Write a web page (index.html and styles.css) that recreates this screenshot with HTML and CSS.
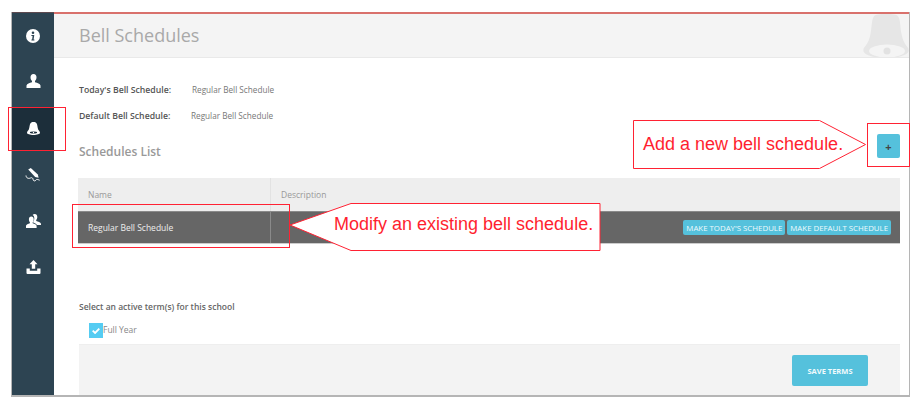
FILE: index.html
```html
<!DOCTYPE html>
<html>
<head>
    <meta charset="UTF-8">
    <title>Bell Schedules</title>
    <link rel="stylesheet" href="styles.css">
</head>
<body>
    <div class="frame">
        <nav class="sidebar">
            <a class="nav-item">
                <svg width="14" height="14" viewBox="0 0 14 14"><circle cx="7" cy="7" r="7" fill="#fff"/><path d="M7 2.400a1.300 1.300 0 1 1 0 2.600 1.300 1.300 0 0 1 0-2.600zM5.400 6h2.900l-.7 4.400h.8v1H5.400v-1h.7L6.600 7H5.400z" fill="#2d4452"/></svg>
            </a>
            <a class="nav-item">
                <svg width="15" height="14" viewBox="0 0 15 14"><path d="M7.500 0c2 0 3 1.400 3 3.300 0 1.700-.7 3-1.500 3.800v1.200c2.500.6 5 1.400 5.500 3.200v2.500H.5v-2.500c.5-1.800 3-2.600 5.500-3.200V7.100C5.200 6.300 4.500 5 4.500 3.300 4.500 1.400 5.500 0 7.500 0z" fill="#fff"/></svg>
            </a>
            <a class="nav-item active">
                <svg width="13" height="13" viewBox="0 0 13 13"><path d="M6.500 0c1.700 0 3 .6 3.500 2.200.6 2 .6 4 1.300 5.600.3.800 1.700 1.700 1.700 3 0 1.300-3 2.200-6.500 2.200S0 12.100 0 10.800c0-1.300 1.400-2.200 1.700-3C2.400 6.200 2.400 4.200 3 2.200 3.500.6 4.800 0 6.500 0z" fill="#fff"/><ellipse cx="6.500" cy="10.500" rx="3.600" ry="1.100" fill="#1c2e3a"/><circle cx="6.500" cy="10.500" r=".7" fill="#fff"/></svg>
            </a>
            <a class="nav-item">
                <svg width="16" height="16" viewBox="0 0 16 16"><path d="M3.200 2.400L5.800 1l7 6.600.8 3.200-3.400-.9z" fill="#fff"/><path d="M1 8.500c.3 3 2.800 3.300 4.500 2.500 1.600-.8 2.400.2 2.600 1.500.3 1.800 2 1.800 3 .4.500-.7 1.500-.6 3.500.3" fill="none" stroke="#fff" stroke-width="1"/></svg>
            </a>
            <a class="nav-item">
                <svg width="15" height="14" viewBox="0 0 15 14"><path d="M8.700 0c1.700 0 2.600 1.300 2.600 3 0 1.400-.6 2.500-1.100 3.100v1c1.800.5 4.300 1.100 4.800 2.600v1.300h-4c-.7-1.400-2.200-2-3.800-2.600v-.8c.7-.8 1.100-2 1.100-3.300C8.300 2.700 7.700 1.200 6.600.9 7.100.3 7.800 0 8.700 0z" fill="#fff"/><path d="M5.300 2.500c1.600 0 2.400 1.200 2.400 2.800 0 1.300-.5 2.300-1 2.900v1c1.800.5 3.700 1.100 3.900 2.600V14H0v-2.200c.2-1.500 2.100-2.100 3.900-2.600v-1c-.5-.6-1-1.600-1-2.900 0-1.600.8-2.800 2.400-2.800z" fill="#fff"/></svg>
            </a>
            <a class="nav-item">
                <svg width="15" height="14" viewBox="0 0 15 14"><path d="M7.500 0l4 4.200H9.200v4.600H5.800V4.200H3.500z" fill="#fff"/><path d="M.5 8.500h3.300v2.200h7.400V8.500h3.300V13a1 1 0 0 1-1 1h-12a1 1 0 0 1-1-1z" fill="#fff"/></svg>
            </a>
        </nav>

        <main class="main">
            <header class="page-head">
                <h1>Bell Schedules</h1>
                <svg class="ghost-bell" width="46" height="44" viewBox="0 0 46 44"><path d="M23 0c6 0 11 0 12.500 3 2 4 1.500 9 3 17 .8 4.500 2.500 9 5.500 12.500 2 2.200 2.200 4.500.5 6.500-3 3.200-12 5-21.500 5S4.500 42.200 1.500 39c-1.700-2-1.500-4.300.5-6.500C5 29 6.700 24.500 7.500 20c1.500-8 1-13 3-17C12 0 17 0 23 0z" fill="#e6e6e6"/><ellipse cx="24" cy="37" rx="18" ry="6.500" fill="#f4f4f4"/><circle cx="24" cy="37" r="3.500" fill="#e2e2e2"/></svg>
            </header>

            <section class="content">
                <div class="info-row">
                    <span class="info-label">Today's Bell Schedule:</span>
                    <span class="info-value">Regular Bell Schedule</span>
                </div>
                <div class="info-row second">
                    <span class="info-label">Default Bell Schedule:</span>
                    <span class="info-value">Regular Bell Schedule</span>
                </div>

                <div class="list-head">
                    <h2>Schedules List</h2>
                    <button class="add-btn">+</button>
                </div>

                <div class="table">
                    <div class="table-head">
                        <div class="col-name">Name</div>
                        <div class="col-desc">Description</div>
                    </div>
                    <div class="table-row">
                        <div class="col-name">Regular Bell Schedule</div>
                        <div class="col-desc row-actions">
                            <button class="small-btn">MAKE TODAY'S SCHEDULE</button>
                            <button class="small-btn">MAKE DEFAULT SCHEDULE</button>
                        </div>
                    </div>
                </div>

                <p class="term-title">Select an active term(s) for this school</p>
                <label class="term-check">
                    <span class="checkbox">
                        <svg width="8" height="6" viewBox="0 0 8 6"><path d="M.7 2.700l2.400 2.300L7.300.7" fill="none" stroke="#fff" stroke-width="1.800"/></svg>
                    </span>
                    Full Year
                </label>

                <div class="save-panel">
                    <button class="save-btn">SAVE TERMS</button>
                </div>
            </section>
        </main>
    </div>

    <!-- red annotations drawn over the screenshot -->
    <div class="mark mark-bell"></div>
    <div class="mark mark-row"></div>
    <div class="mark mark-add"></div>

    <div class="callout callout-add">
        <svg width="234" height="50" viewBox="0 0 234 50"><path d="M.5.500H186.500L232.500 24.500 186.500 48.500H.5z" fill="#fff" stroke="#ff2233"/></svg>
        <span>Add a new bell schedule.</span>
    </div>
    <div class="callout callout-modify">
        <svg width="312" height="49" viewBox="0 0 312 49"><path d="M311 .5V47.500H62L1 22 62 .5z" fill="#fff" stroke="#ff2233"/></svg>
        <span>Modify an existing bell schedule.</span>
    </div>
</body>
</html>
```

FILE: styles.css
```css
body {
    margin: 0;
    background-color: #fff;
    font-family: "Open Sans", "Liberation Sans", sans-serif;
    overflow: hidden;
    height: 409px;
}

button {
    font-family: inherit;
    border: none;
    cursor: pointer;
}

.frame {
    display: flex;
    width: 897px;
    height: 383px;
    margin: 12px 0 0 11px;
    border: 1px solid #b5b5b5;
    border-top: none;
    border-bottom-width: 2px;
    overflow: hidden;
}

.sidebar {
    width: 42px;
    flex-shrink: 0;
    padding-top: 1px;
    background-color: #2d4452;
    box-shadow: inset 0 1px 0 #5d4a50;
}

.nav-item {
    display: flex;
    justify-content: center;
    align-items: center;
    height: 45px;
}

.nav-item.active {
    height: 43px;
    margin: 4px 0 2px;
    background-color: #1c2e3a;
}

.active ~ .nav-item {
    height: 46px;
}

.main {
    flex: 1;
    min-width: 0;
    border-top: 2px solid #d9716c;
}

.page-head {
    position: relative;
    height: 43px;
    background-color: #f4f4f4;
    border-bottom: 1px solid #e9e9e9;
    overflow: hidden;
}

.page-head h1 {
    margin: 0;
    padding-left: 25px;
    font-size: 18px;
    font-weight: 400;
    line-height: 43px;
    color: #a9a9a9;
}

.ghost-bell {
    position: absolute;
    right: 0;
    top: 0;
}

.content {
    padding: 26px 9px 0 25px;
}

.info-row {
    display: flex;
    height: 12px;
    font-size: 8.700px;
    line-height: 12px;
}

.info-row.second {
    margin-top: 14px;
}

.info-label {
    width: 113px;
    font-weight: 600;
    color: #555;
}

.second .info-label {
    width: 112px;
}

.info-value {
    font-size: 8.200px;
    color: #777;
}

.list-head {
    display: flex;
    justify-content: space-between;
    align-items: flex-start;
    height: 50px;
    margin-top: 6px;
}

.list-head h2 {
    margin: 16px 0 0;
    font-size: 12px;
    font-weight: 600;
    line-height: 16px;
    color: #999;
}

.add-btn {
    width: 23px;
    height: 24px;
    margin-top: 6px;
    padding: 0;
    background-color: #55c1dc;
    border-radius: 2px;
    font-size: 11px;
    font-weight: 700;
    color: #444;
}

.table {
    margin-left: -1px;
}

.table-head {
    display: flex;
    height: 33px;
    background-color: #eee;
    font-size: 8.500px;
    line-height: 34px;
    color: #999;
}

.table-row {
    display: flex;
    height: 33px;
    background-color: #666;
    border-top: 1px solid #8a8a8a;
    border-bottom: 1px solid #ccc;
    box-sizing: border-box;
    font-size: 8.500px;
    line-height: 31px;
    color: #eee;
}

.col-name {
    width: 182px;
    padding-left: 10px;
    border-right: 1px solid #e2e2e2;
}

.table-row .col-name {
    border-right-color: #8a8a8a;
}

.col-desc {
    flex: 1;
    padding-left: 10px;
}

.row-actions {
    display: flex;
    justify-content: flex-end;
    align-items: center;
    gap: 2px;
    padding-right: 9px;
}

.small-btn {
    height: 15px;
    padding: 0 3px;
    background-color: #55c1dc;
    border-radius: 2px;
    font-size: 7.850px;
    color: #eefafd;
    white-space: nowrap;
}

.term-title {
    margin: 57px 0 0;
    font-size: 8.500px;
    font-weight: 600;
    line-height: 12px;
    color: #666;
}

.term-check {
    display: flex;
    align-items: flex-start;
    height: 21px;
    margin: 10px 0 0 10px;
    font-size: 8.500px;
    line-height: 13px;
    color: #888;
}

.checkbox {
    display: flex;
    justify-content: center;
    align-items: center;
    width: 14px;
    height: 15px;
    background-color: #55ccf2;
}

.save-panel {
    display: flex;
    justify-content: flex-end;
    height: 52px;
    padding: 10px 32px 0 0;
    box-sizing: border-box;
    background-color: #f3f3f3;
    border-top: 1px solid #eee;
}

.save-btn {
    width: 76px;
    height: 31px;
    background-color: #55c1dc;
    border-radius: 2px;
    font-size: 7.500px;
    font-weight: 700;
    color: #f2fbfd;
}

.mark {
    position: absolute;
    box-sizing: border-box;
    border: 1px solid #ff2233;
}

.mark-bell {
    left: 8px;
    top: 107px;
    width: 58px;
    height: 44px;
}

.mark-row {
    left: 72px;
    top: 204px;
    width: 218px;
    height: 44px;
}

.mark-add {
    left: 867px;
    top: 123px;
    width: 43px;
    height: 44px;
}

.callout {
    position: absolute;
    font-family: "Liberation Sans", sans-serif;
    font-size: 18px;
    color: #ff1f30;
    white-space: nowrap;
}

.callout svg {
    display: block;
}

.callout span {
    position: absolute;
    top: 14px;
    line-height: 21px;
}

.callout-add {
    left: 633px;
    top: 120px;
}

.callout-add span {
    left: 10px;
}

.callout-modify {
    left: 289px;
    top: 203px;
}

.callout-modify span {
    left: 45px;
    top: 11px;
}
```
